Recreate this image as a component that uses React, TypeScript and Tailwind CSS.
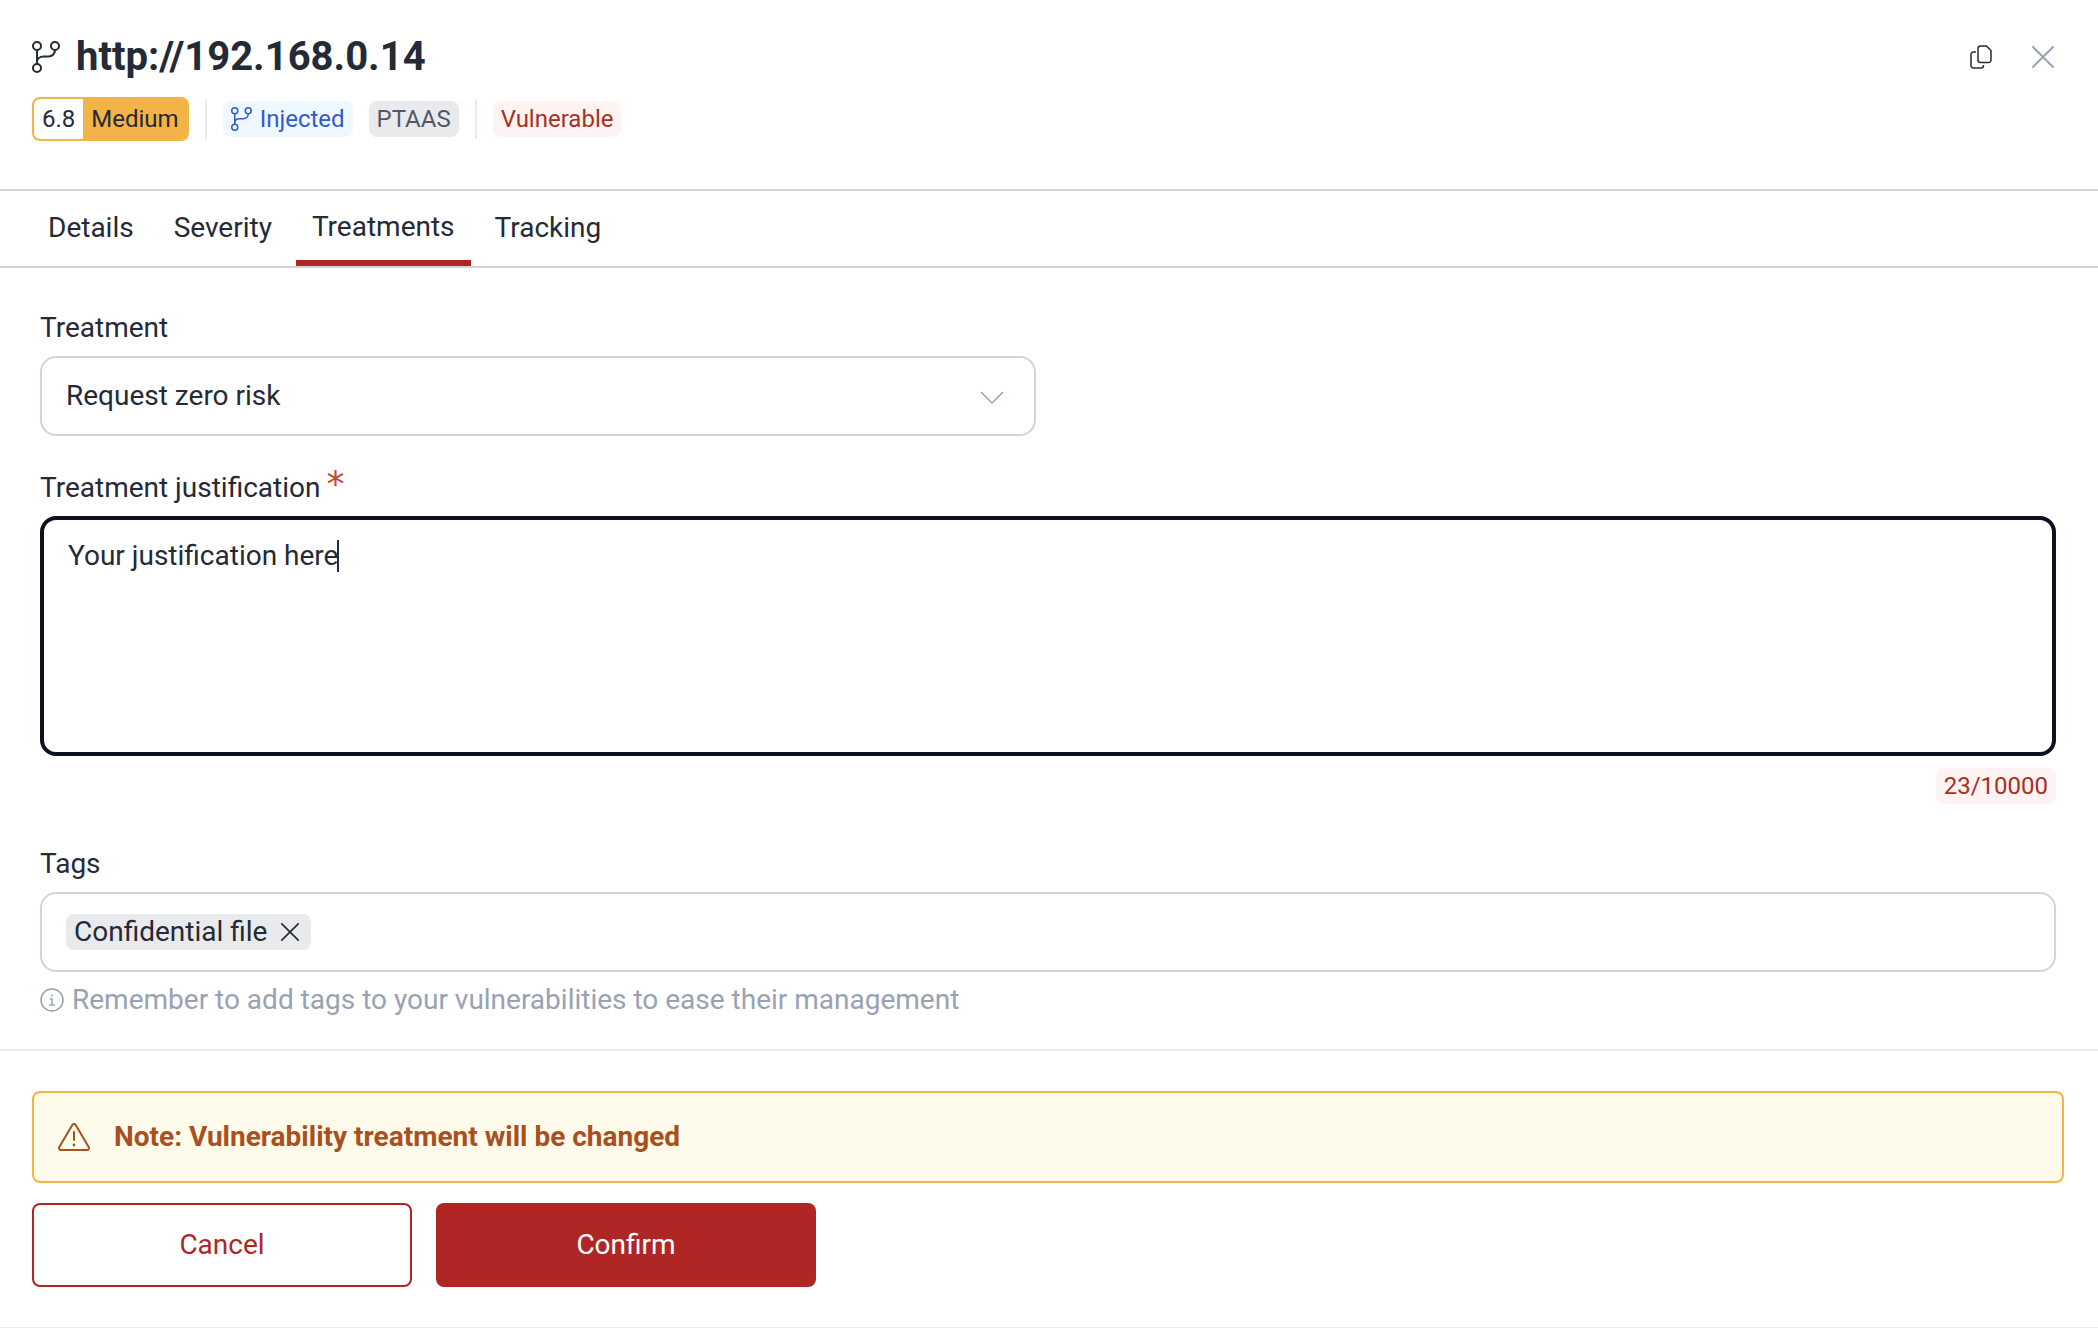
import { useState } from "react";

const tabs = ["Details", "Severity", "Treatments", "Tracking"];

const treatments = ["Request zero risk", "Temporarily accepted", "Permanently accepted", "In progress"];

const BranchIcon = ({ className }: { className: string }) => (
  <svg viewBox="0 0 28 32" fill="none" stroke="currentColor" strokeWidth="2" className={className} aria-hidden="true">
    <circle cx="5" cy="5" r="4" />
    <circle cx="23" cy="5" r="4" />
    <circle cx="5" cy="27" r="4" />
    <path d="M5 9v14M23 9c0 4-3 6.5-6.5 6.5h-5C8 15.5 5 17.5 5 21" />
  </svg>
);

const CopyIcon = () => (
  <svg viewBox="0 0 22 24" fill="none" stroke="currentColor" strokeWidth="1.5" className="w-[22px] h-6" aria-hidden="true">
    <path d="M10.5 1h6L21 5.5V15a2.5 2.5 0 0 1-2.5 2.5h-8A2.5 2.5 0 0 1 8 15V3.5A2.5 2.5 0 0 1 10.5 1Z" strokeLinejoin="round" />
    <path d="M6 7H3.5A2.5 2.5 0 0 0 1 9.5v11A2.5 2.5 0 0 0 3.5 23H11a2.5 2.5 0 0 0 2.5-2.5V20" />
  </svg>
);

const CrossIcon = ({ className }: { className: string }) => (
  <svg viewBox="0 0 22 22" fill="none" stroke="currentColor" strokeWidth="2" strokeLinecap="round" className={className} aria-hidden="true">
    <path d="M1 1l20 20M21 1L1 21" />
  </svg>
);

const ChevronIcon = () => (
  <svg viewBox="0 0 24 24" fill="none" stroke="currentColor" strokeWidth="1.5" className="w-6 h-6 text-[#98a2b3]" aria-hidden="true">
    <path d="M1 8l11 11L23 8" />
  </svg>
);

const InfoIcon = () => (
  <svg viewBox="0 0 24 24" fill="none" stroke="currentColor" strokeWidth="1.5" className="w-6 h-6 shrink-0" aria-hidden="true">
    <circle cx="12" cy="12" r="11" />
    <path d="M10 11h2v6M9 17h6" />
    <circle cx="12" cy="7.5" r="1" fill="currentColor" stroke="none" />
  </svg>
);

const WarningIcon = () => (
  <svg viewBox="0 0 32 28" fill="none" stroke="currentColor" strokeWidth="2" strokeLinejoin="round" className="w-8 h-7 shrink-0" aria-hidden="true">
    <path d="M14.3 2a2 2 0 0 1 3.4 0l13 22a2 2 0 0 1-1.7 3H3a2 2 0 0 1-1.7-3Z" />
    <path d="M16 9v8" strokeLinecap="round" />
    <circle cx="16" cy="22" r="1.4" fill="currentColor" stroke="none" />
  </svg>
);

const Header = () => (
  <header className="flex justify-between items-start px-8 pt-[33px] pb-12">
    <div>
      <h1 className="flex items-center gap-4 text-[40px] leading-[48px] font-bold">
        <BranchIcon className="w-7 h-8" />
        http://192.168.0.14
      </h1>
      <div className="flex items-center mt-4 gap-4 text-2xl leading-9">
        <div className="flex h-11 rounded-lg border-2 border-[#f2b347] bg-[#f2b347] overflow-hidden">
          <span className="bg-white px-2 leading-10">6.8</span>
          <span className="px-2 leading-10">Medium</span>
        </div>
        <div className="w-[2px] h-10 bg-[#e9eaee]" />
        <span className="flex items-center gap-2 h-9 px-2 rounded-lg bg-[#f0f8ff] text-[#2f5bd0]">
          <BranchIcon className="w-[21px] h-6" />
          Injected
        </span>
        <span className="h-9 px-2 rounded-lg bg-[#e9eaee] text-[#535862]">PTAAS</span>
        <div className="w-[2px] h-10 bg-[#e9eaee]" />
        <span className="h-9 px-2 rounded-lg bg-[#fdf3f2] text-[#a92f22]">Vulnerable</span>
      </div>
    </div>
    <div className="flex items-center gap-10 h-12 pr-3">
      <button type="button" aria-label="Copy" className="cursor-pointer">
        <CopyIcon />
      </button>
      <button type="button" aria-label="Close" className="cursor-pointer text-[#98a2b3]">
        <CrossIcon className="w-[22px] h-[22px]" />
      </button>
    </div>
  </header>
);

const Tabs = () => (
  <nav className="flex gap-2 px-8 border-y-2 border-[#d0d5da]">
    {tabs.map((tab) => (
      <a
        key={tab}
        href={`#${tab.toLowerCase()}`}
        className={
          tab === "Treatments"
            ? "h-[75px] px-4 leading-[72px] border-b-6 border-[#af2624]"
            : "h-[75px] px-4 leading-[74px]"
        }
      >
        {tab}
      </a>
    ))}
  </nav>
);

const TreatmentForm = () => {
  const [treatment, setTreatment] = useState(treatments[0]);
  const [justification, setJustification] = useState("Your justification here");
  const [tags, setTags] = useState(["Confidential file"]);

  return (
    <div className="pl-10 pr-[42px] pt-10 pb-[29px] border-b-2 border-[#e9eaee]">
      <label htmlFor="treatment" className="block mb-2 leading-10">
        Treatment
      </label>
      <div className="grid grid-cols-2 gap-6">
        <div className="grid items-center">
          <select
            id="treatment"
            value={treatment}
            onChange={(event) => setTreatment(event.target.value)}
            className="col-start-1 row-start-1 w-full h-20 px-6 rounded-2xl border-2 border-[#d0d5da] bg-white appearance-none outline-none"
          >
            {treatments.map((item) => (
              <option key={item} value={item}>
                {item}
              </option>
            ))}
          </select>
          <span className="col-start-1 row-start-1 justify-self-end mr-8 pointer-events-none">
            <ChevronIcon />
          </span>
        </div>
      </div>

      <label htmlFor="justification" className="flex gap-[6px] h-10 mt-8 mb-2 leading-10">
        Treatment justification
        <span className="font-['DejaVu_Sans',sans-serif] text-4xl leading-8 text-[#bc4b33]">*</span>
      </label>
      <div className="relative">
        <textarea
          id="justification"
          autoFocus
          required
          value={justification}
          onChange={(event) => setJustification(event.target.value)}
          className="block w-full h-60 px-6 py-4 rounded-2xl border-4 border-[#0c111d] caret-transparent resize-none outline-none"
        />
        <span className="absolute left-[297px] top-6 w-[2px] h-8 bg-[#242a36] pointer-events-none" />
      </div>
      <div className="flex justify-end mt-3">
        <span className="h-9 px-2 rounded-lg bg-[#fdf3f2] text-[#a92f22] text-2xl leading-9">
          {justification.length}/10000
        </span>
      </div>

      <label htmlFor="tags" className="block mt-10 mb-2 leading-10">
        Tags
      </label>
      <div className="flex items-center gap-2 h-20 px-6 rounded-2xl border-2 border-[#d0d5da]">
        {tags.map((tag) => (
          <span key={tag} className="flex items-center gap-[14px] h-9 pl-2 pr-3 rounded-lg bg-[#e9eaee] whitespace-nowrap">
            {tag}
            <button
              type="button"
              aria-label={`Remove ${tag}`}
              onClick={() => setTags(tags.filter((item) => item !== tag))}
              className="cursor-pointer"
            >
              <CrossIcon className="w-[18px] h-[18px]" />
            </button>
          </span>
        ))}
        <input id="tags" type="text" className="flex-1 min-w-0 outline-none" />
      </div>
      <p className="flex items-center gap-2 mt-2 leading-10 text-[#98a2b3]">
        <InfoIcon />
        Remember to add tags to your vulnerabilities to ease their management
      </p>
    </div>
  );
};

const Footer = () => (
  <footer className="pl-8 pr-[34px] py-10 border-b border-[#e9eaee]">
    <div role="alert" className="flex items-center gap-6 h-[92px] px-6 rounded-lg border-2 border-[#f2b347] bg-[#fffbeb] text-[#a94f21] font-bold">
      <WarningIcon />
      Note: Vulnerability treatment will be changed
    </div>
    <div className="flex gap-6 mt-5">
      <button type="button" className="w-[380px] h-[84px] rounded-lg border-2 border-[#af2624] text-[#af2624] cursor-pointer">
        Cancel
      </button>
      <button type="button" className="w-[380px] h-[84px] rounded-lg bg-[#af2624] text-white cursor-pointer">
        Confirm
      </button>
    </div>
  </footer>
);

const App = () => (
  <main className="min-h-screen bg-white font-[Roboto,sans-serif] text-[28px] leading-10 text-[#242a36]">
    <Header />
    <Tabs />
    <TreatmentForm />
    <Footer />
  </main>
);

export default App;
